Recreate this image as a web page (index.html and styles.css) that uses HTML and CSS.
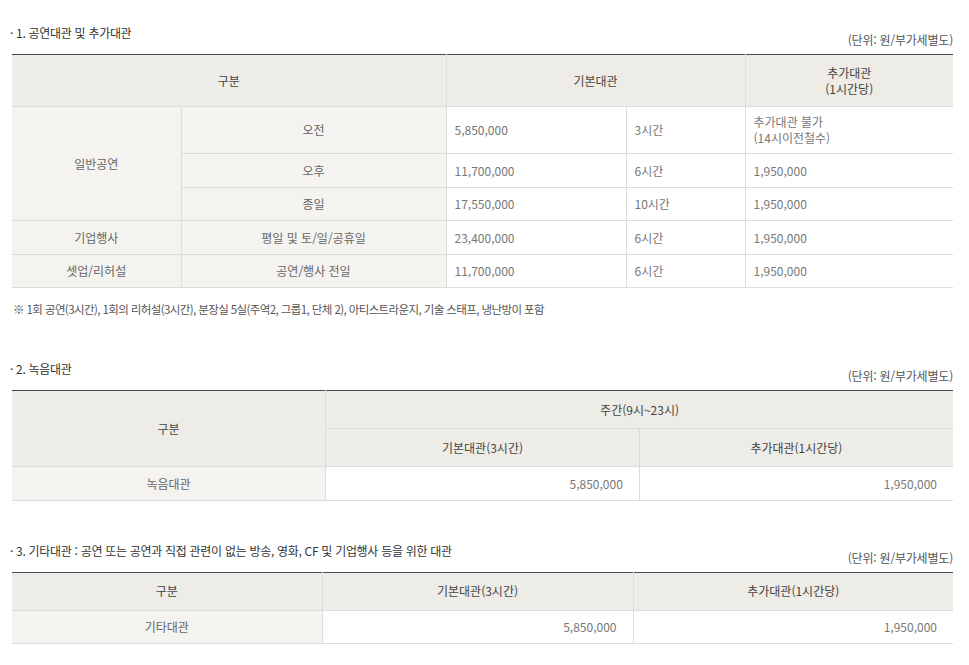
FILE: index.html
```html
<!DOCTYPE html>
<html lang="ko">
<head>
<meta charset="utf-8">
<title>대관료</title>
<link rel="stylesheet" href="styles.css">
</head>
<body>
<div class="page">
  <section class="sec sec1">
    <div class="head">
      <h3 class="title">· 1. 공연대관 및 추가대관</h3>
      <p class="unit">(단위: 원/부가세별도)</p>
    </div>
    <table class="tbl t1">
      <colgroup>
        <col class="c1a"><col class="c1b"><col class="c1c"><col class="c1d"><col class="c1e">
      </colgroup>
      <thead>
        <tr><th colspan="2">구분</th><th colspan="2">기본대관</th><th>추가대관<br>(1시간당)</th></tr>
      </thead>
      <tbody>
        <tr><td rowspan="3" class="lab">일반공연</td><td class="lab two">오전</td><td class="tl two">5,850,000</td><td class="tl two">3시간</td><td class="tl two">추가대관 불가<br>(14시이전철수)</td></tr>
        <tr><td class="lab">오후</td><td class="tl">11,700,000</td><td class="tl">6시간</td><td class="tl">1,950,000</td></tr>
        <tr><td class="lab">종일</td><td class="tl">17,550,000</td><td class="tl">10시간</td><td class="tl">1,950,000</td></tr>
        <tr><td class="lab">기업행사</td><td class="lab">평일 및 토/일/공휴일</td><td class="tl">23,400,000</td><td class="tl">6시간</td><td class="tl">1,950,000</td></tr>
        <tr><td class="lab">셋업/리허설</td><td class="lab">공연/행사 전일</td><td class="tl">11,700,000</td><td class="tl">6시간</td><td class="tl">1,950,000</td></tr>
      </tbody>
    </table>
    <p class="note">※ 1회 공연(3시간), 1회의 리허설(3시간), 분장실 5실(주역2, 그룹1, 단체 2), 아티스트라운지, 기술 스태프, 냉난방이 포함</p>
  </section>

  <section class="sec sec2">
    <div class="head">
      <h3 class="title">· 2. 녹음대관</h3>
      <p class="unit">(단위: 원/부가세별도)</p>
    </div>
    <table class="tbl t2">
      <colgroup><col class="c2"><col class="c2"><col class="c2"></colgroup>
      <thead>
        <tr><th rowspan="2">구분</th><th colspan="2">주간(9시~23시)</th></tr>
        <tr><th>기본대관(3시간)</th><th>추가대관(1시간당)</th></tr>
      </thead>
      <tbody>
        <tr><td class="lab">녹음대관</td><td class="tr">5,850,000</td><td class="tr">1,950,000</td></tr>
      </tbody>
    </table>
  </section>

  <section class="sec sec3">
    <div class="head">
      <h3 class="title">· 3. 기타대관 : 공연 또는 공연과 직접 관련이 없는 방송, 영화, CF 및 기업행사 등을 위한 대관</h3>
      <p class="unit">(단위: 원/부가세별도)</p>
    </div>
    <table class="tbl t3">
      <colgroup><col class="c3a"><col class="c3b"><col class="c3c"></colgroup>
      <thead>
        <tr><th>구분</th><th>기본대관(3시간)</th><th>추가대관(1시간당)</th></tr>
      </thead>
      <tbody>
        <tr><td class="lab">기타대관</td><td class="tr">5,850,000</td><td class="tr">1,950,000</td></tr>
      </tbody>
    </table>
  </section>
</div>
</body>
</html>
```

FILE: styles.css
```css
html, body {
  margin: 0;
  padding: 0;
  background: #fff;
}
body {
  font-family: "Noto Sans CJK KR", "Noto Sans", sans-serif;
  font-size: 12px;
  color: #666;
}
.page {
  padding: 24px 16px 0 12px;
}
.head {
  display: flex;
  justify-content: space-between;
  align-items: flex-end;
  margin-bottom: 5px;
}
.title {
  margin: 0 0 7px -2px;
  font-size: 12px;
  font-weight: normal;
  line-height: 18px;
  color: #333;
  letter-spacing: -0.3px;
}
.unit {
  margin: 0;
  line-height: 18px;
  color: #555;
  letter-spacing: -0.2px;
}
.tbl {
  width: 100%;
  border-collapse: collapse;
  table-layout: fixed;
  border-top: 1px solid #4a4a4a;
}
.tbl th, .tbl td {
  border: 1px solid #dcdcdc;
  border-top: 0;
  line-height: 16px;
}
.tbl tr > :first-child { border-left: 0; }
.tbl tr > :last-child { border-right: 0; }
.tbl thead tr:first-child th { border-top: 1px solid #4a4a4a; }
.tbl th {
  background: #eeece6;
  font-weight: normal;
  color: #444;
  padding: 10.5px 8px;
  text-align: center;
}
.t1 th { padding: 9.5px 8px; }
.tbl td {
  padding: 8.5px 8px 8px;
  color: #777;
  text-align: center;
}
.tbl td.lab {
  background: #f5f3ef;
  color: #666;
}
.tbl td.tl { text-align: left; }
.tbl td.two { padding-top: 7px; padding-bottom: 7px; }
.tbl td.tr { text-align: right; padding-right: 16px; }

.c1a { width: 169px; }
.c1b { width: 265px; }
.c1c { width: 180px; }
.c1d { width: 119px; }
.c1e { width: auto; }
.c2 { width: 33.333%; }
.c3a { width: 310px; }
.c3b { width: 311px; }
.c3c { width: auto; }

.note {
  margin: 12px 0 0 1px;
  font-size: 11.5px;
  line-height: 18px;
  color: #555;
  letter-spacing: -0.6px;
}
.sec2 { margin-top: 42px; }
.sec3 { margin-top: 41px; }
```
